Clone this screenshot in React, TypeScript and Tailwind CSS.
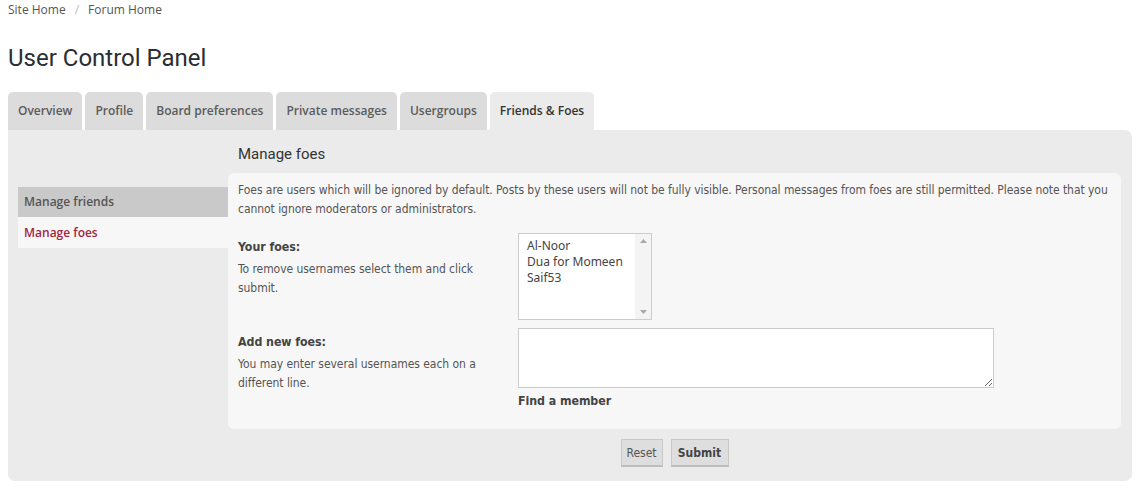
import React from 'react';

const tabs = ['Overview', 'Profile', 'Board preferences', 'Private messages', 'Usergroups', 'Friends & Foes'];
const foes = ['Al-Noor', 'Dua for Momeen', 'Saif53'];

const body = "font-['DejaVu_Sans_Condensed',Tahoma,sans-serif]";

export default function App() {
  return (
    <div className="min-h-[488px] bg-white px-2 text-[#555]">
      {/* breadcrumbs */}
      <div className="flex h-[20px] items-center gap-[9px] font-['Open_Sans',sans-serif] text-[12px] text-[#555]">
        <span>Site Home</span>
        <span className="text-[#bbb]">/</span>
        <span>Forum Home</span>
      </div>

      <h2 className="mt-[23px] font-['Roboto',sans-serif] text-[24px] leading-[30px] text-[#2a2d33]">User Control Panel</h2>

      {/* tabs */}
      <div className="mt-[19px] flex gap-[3px] font-['Open_Sans',sans-serif] text-[12px] font-semibold">
        {tabs.map((t, i) => {
          const active = i === tabs.length - 1;
          return (
            <div
              key={t}
              className={
                'flex h-[38px] items-center rounded-t-[5px] px-[10px] ' +
                (active ? 'bg-[#ebebeb] text-[#333]' : 'bg-[#dcdcdc] text-[#5b5b5b]')
              }
            >
              {t}
            </div>
          );
        })}
      </div>

      {/* panel */}
      <div className="flex rounded-b-[7px] rounded-tr-[7px] bg-[#ebebeb] pb-[14px] pl-[10px] pr-[11px]">
        <div className="w-[210px] shrink-0 pt-[57px] font-['Open_Sans',sans-serif] text-[12px] font-semibold">
          <div className="flex h-[30px] items-center bg-[#c9c9c9] pl-[6px] text-[#555]">Manage friends</div>
          <div className="flex h-[31px] items-center bg-[#f7f7f7] pl-[6px] text-[#a3263f]">Manage foes</div>
        </div>

        <div className="flex-1">
          <h3 className="pl-[10px] pt-[14px] font-['Roboto',sans-serif] text-[15px] leading-[20px] text-[#333]">Manage foes</h3>
          <div className={`mt-[9px] rounded-[6px] bg-[#f7f7f7] pb-[19px] pl-[10px] pr-[12px] pt-[8px] ${body} text-[12px] tracking-[-0.05px]`}>
            <p className="leading-[19px] text-[#555]">
              Foes are users which will be ignored by default. Posts by these users will not be fully visible. Personal messages from foes are still permitted. Please note that you cannot ignore moderators or administrators.
            </p>

            <div className="mt-[14px] flex">
              <div className="w-[280px] shrink-0 pr-[10px] pt-[5px]">
                <div className="text-[12.3px] font-bold leading-[18px] text-[#444]">Your foes:</div>
                <div className="mt-[4px] leading-[19px] text-[#555]">To remove usernames select them and click submit.</div>
              </div>
              <div className="flex h-[87px] w-[134px] border border-[#cccccc] bg-white">
                <div className="flex-1 pl-[8px] pt-[4px] font-['Noto_Sans',sans-serif] text-[12px] leading-[16px] tracking-normal text-[#444]">
                  {foes.map((f) => (
                    <div key={f}>{f}</div>
                  ))}
                </div>
                <div className="flex w-[16px] flex-col items-center justify-between bg-[#f4f4f4] py-[5px]">
                  <svg width="7" height="4" viewBox="0 0 7 4"><path d="M0 4 L3.5 0 L7 4 Z" fill="#a8a8a8" /></svg>
                  <svg width="7" height="4" viewBox="0 0 7 4"><path d="M0 0 L3.5 4 L7 0 Z" fill="#a8a8a8" /></svg>
                </div>
              </div>
            </div>

            <div className="mt-[8px] flex">
              <div className="w-[280px] shrink-0 pr-[10px] pt-[5px]">
                <div className="text-[12.3px] font-bold leading-[18px] text-[#444]">Add new foes:</div>
                <div className="mt-[4px] leading-[19px] text-[#555]">You may enter several usernames each on a different line.</div>
              </div>
              <div>
                <textarea className="block h-[60px] w-[476px] border border-[#cccccc] bg-white outline-none" />
                <div className="mt-[4px] text-[12.3px] font-bold leading-[18px] text-[#444]">Find a member</div>
              </div>
            </div>
          </div>

          <div className={`mt-[10px] flex justify-center gap-[8px] ${body} text-[12px]`}>
            <button className="h-[28px] w-[42px] border border-[#c8c8c8] border-b-[2px] border-b-[#bdbdbd] bg-[#dedede] text-[#555]">Reset</button>
            <button className="h-[28px] w-[58px] border border-[#c8c8c8] border-b-[2px] border-b-[#bdbdbd] bg-[#dedede] font-bold text-[#444]">Submit</button>
          </div>
        </div>
      </div>
    </div>
  );
}
